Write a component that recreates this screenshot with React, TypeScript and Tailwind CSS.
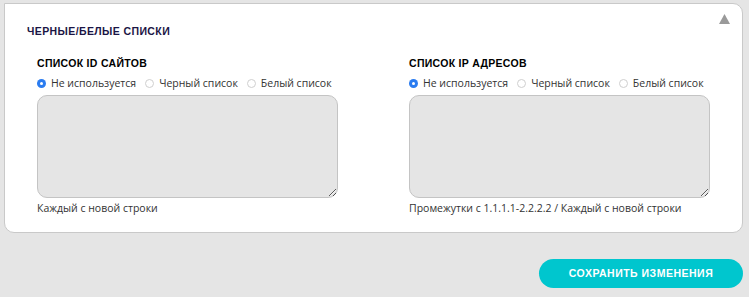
import { useState } from 'react';

const heading = { fontFamily: '"Liberation Sans", Arial, sans-serif' };
const body = { fontFamily: '"Open Sans", "Noto Sans", sans-serif' };

function Radio({ checked, label }: { checked?: boolean; label: string }) {
  return (
    <label className="flex items-center gap-[5px] cursor-pointer whitespace-nowrap shrink-0">
      {checked ? (
        <span className="w-[9px] h-[9px] rounded-full bg-[#2b7cf0] flex items-center justify-center shrink-0">
          <span className="w-[3px] h-[3px] rounded-full bg-white" />
        </span>
      ) : (
        <span className="w-[9px] h-[9px] rounded-full border border-[#cfcfcf] bg-white shrink-0" />
      )}
      <span>{label}</span>
    </label>
  );
}

function ListBlock({ title, hint }: { title: string; hint: string }) {
  const [value, setValue] = useState('');
  return (
    <div className="w-[301px]">
      <h3 className="text-[10.5px] font-black uppercase text-black tracking-[0.3px] leading-none" style={heading}>
        {title}
      </h3>
      <div className="flex items-center gap-[9px] mt-[10px] text-[10.5px] text-[#333] leading-none" style={body}>
        <Radio checked label="Не используется" />
        <Radio label="Черный список" />
        <Radio label="Белый список" />
      </div>
      <textarea
        value={value}
        onChange={(e) => setValue(e.target.value)}
        className="block w-[301px] h-[103px] mt-[6px] bg-[#e5e5e5] border border-[#c4c4c4] rounded-[10px] outline-none"
      />
      <p className="text-[10.5px] text-[#333] mt-[2px] leading-[16px] whitespace-nowrap" style={body}>
        {hint}
      </p>
    </div>
  );
}

export default function App() {
  return (
    <div className="w-[749px] h-[297px] bg-[#e5e5e5] pt-[3px] pl-[4px] flex flex-col">
      <section className="relative w-[739px] h-[230px] bg-white border border-[#c9c9c9] rounded-[10px] rounded-tl-none pl-[22px] pt-[22px]">
        <svg className="absolute right-[12px] top-[10px]" width="11" height="10" viewBox="0 0 11 10">
          <polygon points="5.5,0 11,10 0,10" fill="#9a9a9a" />
        </svg>
        <h2 className="text-[10.5px] font-black uppercase text-[#1b1545] tracking-[0.4px] leading-none" style={heading}>
          Черные/белые списки
        </h2>
        <div className="flex gap-[71px] pl-[10px] mt-[21px]">
          <ListBlock title="Список ID сайтов" hint="Каждый с новой строки" />
          <ListBlock title="Список IP адресов" hint="Промежутки с 1.1.1.1-2.2.2.2 / Каждый с новой строки" />
        </div>
      </section>
      <div className="flex justify-end pr-[6px] mt-[26px]">
        <button
          className="w-[204px] h-[29px] rounded-full bg-[#00c6ce] text-white text-[10.5px] font-black uppercase tracking-[0.5px]"
          style={heading}
        >
          Сохранить изменения
        </button>
      </div>
    </div>
  );
}
